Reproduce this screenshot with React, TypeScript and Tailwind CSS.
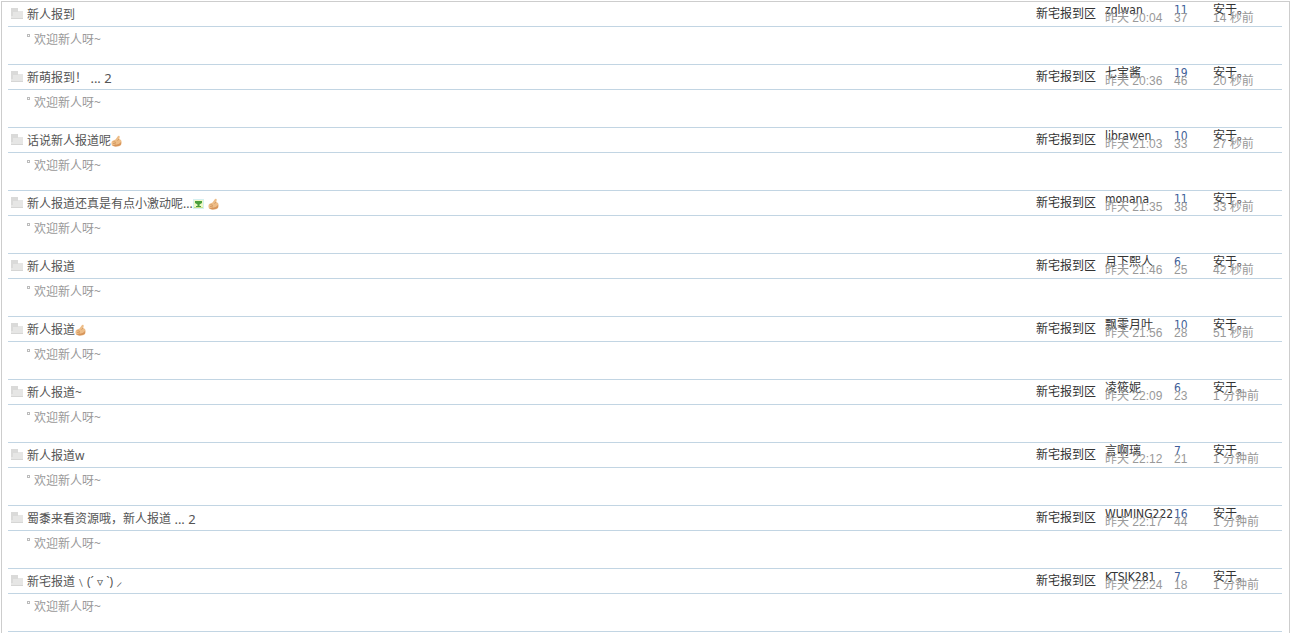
import React from "react";

type Smiley = "thumb" | "sprout";

interface Thread {
  title: string;
  smileys?: Smiley[];
  page?: string;
  kaomoji?: boolean;
  author: string;
  posted: string;
  replies: number;
  views: number;
  last: string;
}

const threads: Thread[] = [
  { title: "新人报到", author: "zqlwan", posted: "昨天 20:04", replies: 11, views: 37, last: "14 秒前" },
  { title: "新萌报到！", page: "2", author: "七宝酱", posted: "昨天 20:36", replies: 19, views: 46, last: "20 秒前" },
  { title: "话说新人报道呢", smileys: ["thumb"], author: "librawen", posted: "昨天 21:03", replies: 10, views: 33, last: "27 秒前" },
  { title: "新人报道还真是有点小激动呢...", smileys: ["sprout", "thumb"], author: "monana", posted: "昨天 21:35", replies: 11, views: 38, last: "33 秒前" },
  { title: "新人报道", author: "月下熙人", posted: "昨天 21:46", replies: 6, views: 25, last: "42 秒前" },
  { title: "新人报道", smileys: ["thumb"], author: "飘零月叶", posted: "昨天 21:56", replies: 10, views: 28, last: "51 秒前" },
  { title: "新人报道~", author: "凌筱妮", posted: "昨天 22:09", replies: 6, views: 23, last: "1 分钟前" },
  { title: "新人报道w", author: "言啊璃", posted: "昨天 22:12", replies: 7, views: 21, last: "1 分钟前" },
  { title: "蜀黍来看资源哦，新人报道", page: "2", author: "WUMING222", posted: "昨天 22:17", replies: 16, views: 44, last: "1 分钟前" },
  { title: "新宅报道", kaomoji: true, author: "KTSJK281", posted: "昨天 22:24", replies: 7, views: 18, last: "1 分钟前" },
];

function FolderIcon() {
  return (
    <svg width="12" height="11" viewBox="0 0 12 11" aria-hidden="true" className="mb-px block">
      <path d="M0 0h7v3h5v8H0z" fill="#e6e6e5" />
      <path d="M0 0h7v4H2v4H0z" fill="#dadad9" />
      <path d="M0 10h12v1H0z" fill="#d6d6d5" />
    </svg>
  );
}

function ThumbIcon() {
  return (
    <svg width="11" height="12" viewBox="0 0 11 12" aria-hidden="true" className="shrink-0">
      <path d="M4.500 4.500L7 1Q8.800 .2 8.700 2L8.300 4L10 5Q11.300 7.500 10 10Q8 12 4.500 11.500L1 10.500Q-.2 8 1.200 6Z" fill="#edbd88" />
      <path d="M1 10.500Q5 12.500 9.800 10L10 7Q8 10 4.500 9.800Z" fill="#d6945a" />
      <path d="M2.500 6.500l2.500 1M2 8.300l3 .8M8 4.200L6.500 5.500" stroke="#c98b52" strokeWidth=".7" fill="none" />
    </svg>
  );
}

function SproutIcon() {
  return (
    <svg width="11" height="12" viewBox="0 0 11 12" aria-hidden="true" className="shrink-0">
      <path d="M0 1h11v10H0z" fill="#d5f0f0" />
      <path d="M1 2h9v8H1z" fill="#eef8c8" />
      <path d="M1 9h9v1H1z" fill="#c9e08a" />
      <path d="M2 3h7v2L6.500 6.500V8H8v1H3V8h1.500V6.500L2 5z" fill="#4a9f3d" />
    </svg>
  );
}

function Title({ thread }: { thread: Thread }) {
  return (
    <div className="flex items-center whitespace-pre leading-4">
      <a href="#thread">{thread.title}</a>
      {thread.kaomoji && <span>﹨(ˊ ▿ ˋ) ⸝</span>}
      {thread.smileys && (
        <span className="flex gap-1">
          {thread.smileys.map((s) => (s === "thumb" ? <ThumbIcon key={s} /> : <SproutIcon key={s} />))}
        </span>
      )}
      {thread.page && (
        <span className="text-[13px] leading-4">
          {" ... "}
          <a href="#page">{thread.page}</a>
        </span>
      )}
    </div>
  );
}

const cell = "h-[25px] border-b border-[#c2d5e3] p-0";
const stacked = "flex flex-col leading-2 whitespace-nowrap";
const latin = "font-['DejaVu_Sans_Condensed','Noto_Sans','Noto_Sans_CJK_SC',sans-serif]";
const grey = "font-['Liberation_Sans','Noto_Sans_CJK_SC',sans-serif] text-[#999]";

function ThreadRows({ thread }: { thread: Thread }) {
  return (
    <tbody>
      <tr>
        <td className={`${cell} pl-[3px]`}>
          <FolderIcon />
        </td>
        <td className="h-[25px] border-b border-[#c2d5e3] p-0 pt-0.5 text-[#555]">
          <Title thread={thread} />
        </td>
        <td className={cell}>
          <a href="#forum">新宅报到区</a>
        </td>
        <td className={cell}>
          <div className={stacked}>
            <a href="#author" className={latin}>{thread.author}</a>
            <span className={grey}>{thread.posted}</span>
          </div>
        </td>
        <td className={cell}>
          <div className={stacked}>
            <a href="#replies" className={`${latin} text-[#3f5f99]`}>{thread.replies}</a>
            <span className={grey}>{thread.views}</span>
          </div>
        </td>
        <td className={cell}>
          <div className={stacked}>
            <a href="#user">安于。</a>
            <a href="#last" className={grey}>{thread.last}</a>
          </div>
        </td>
      </tr>
      <tr>
        <td className="h-[38px] border-b border-[#c2d5e3] p-0" />
        <td colSpan={5} className="h-[38px] border-b border-[#c2d5e3] p-0 pb-3">
          <div className="flex gap-1">
            <span className="mt-0.5 size-[3px] border border-[#bbb]" />
            <a href="#reply" className="text-[#999]">欢迎新人呀~</a>
          </div>
        </td>
      </tr>
    </tbody>
  );
}

export default function App() {
  return (
    <div className="flex min-h-screen bg-white px-px pt-px font-['Noto_Sans','Noto_Sans_CJK_SC',sans-serif] text-xs text-[#333]">
      <main className="w-full border-x border-t border-[#cdcdcd] pr-[7px] pl-1.5">
        <table className="w-full table-fixed border-separate border-spacing-0 text-left">
          <colgroup>
            <col className="w-[19px]" />
            <col />
            <col className="w-[69px]" />
            <col className="w-[69px]" />
            <col className="w-[39px]" />
            <col className="w-[69px]" />
          </colgroup>
          {threads.map((thread) => (
            <ThreadRows key={thread.author} thread={thread} />
          ))}
        </table>
      </main>
    </div>
  );
}
